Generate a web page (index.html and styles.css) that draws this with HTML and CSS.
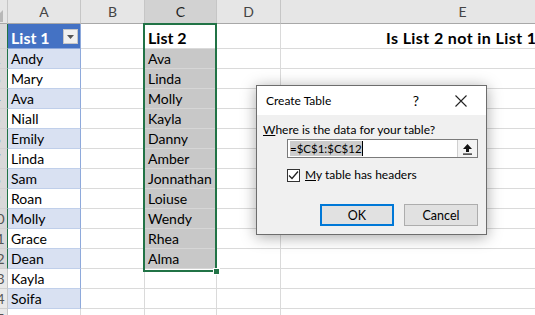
FILE: index.html
```html
<!DOCTYPE html>
<html lang="en">
<head>
    <meta charset="UTF-8">
    <title>Create Table</title>
    <link rel="stylesheet" href="styles.css">
</head>
<body>
    <div class="sheet">
        <div class="row head">
            <div class="rh corner">
                <svg width="26" height="24" viewBox="0 0 26 24"><polygon points="9,22 21,22 21,10" fill="#b8b8b8"/></svg>
            </div>
            <div class="ch">A</div>
            <div class="ch">B</div>
            <div class="ch ch-sel">C</div>
            <div class="ch">D</div>
            <div class="ch">E</div>
        </div>
        <div class="row r1">
            <div class="rh rh-sel">1</div>
            <div class="c th">List 1
                <span class="filter">
                    <svg width="7" height="4" viewBox="0 0 7 4"><polygon points="0,0 7,0 3.5,4" fill="#555"/></svg>
                </span>
            </div>
            <div class="c"></div>
            <div class="c act">List 2</div>
            <div class="c"></div>
            <div class="c title">Is List 2 not in List 1</div>
        </div>
        <div class="row"><div class="rh rh-sel">2</div><div class="c tb">Andy</div><div class="c"></div><div class="c sl">Ava</div><div class="c"></div><div class="c"></div></div>
        <div class="row"><div class="rh rh-sel">3</div><div class="c tw">Mary</div><div class="c"></div><div class="c sl">Linda</div><div class="c"></div><div class="c"></div></div>
        <div class="row"><div class="rh rh-sel">4</div><div class="c tb">Ava</div><div class="c"></div><div class="c sl">Molly</div><div class="c"></div><div class="c"></div></div>
        <div class="row"><div class="rh rh-sel">5</div><div class="c tw">Niall</div><div class="c"></div><div class="c sl">Kayla</div><div class="c"></div><div class="c"></div></div>
        <div class="row"><div class="rh rh-sel">6</div><div class="c tb">Emily</div><div class="c"></div><div class="c sl">Danny</div><div class="c"></div><div class="c"></div></div>
        <div class="row"><div class="rh rh-sel">7</div><div class="c tw">Linda</div><div class="c"></div><div class="c sl">Amber</div><div class="c"></div><div class="c"></div></div>
        <div class="row"><div class="rh rh-sel">8</div><div class="c tb">Sam</div><div class="c"></div><div class="c sl">Jonnathan</div><div class="c"></div><div class="c"></div></div>
        <div class="row"><div class="rh rh-sel">9</div><div class="c tw">Roan</div><div class="c"></div><div class="c sl">Loiuse</div><div class="c"></div><div class="c"></div></div>
        <div class="row"><div class="rh rh-sel">10</div><div class="c tb">Molly</div><div class="c"></div><div class="c sl">Wendy</div><div class="c"></div><div class="c"></div></div>
        <div class="row"><div class="rh rh-sel">11</div><div class="c tw">Grace</div><div class="c"></div><div class="c sl">Rhea</div><div class="c"></div><div class="c"></div></div>
        <div class="row"><div class="rh rh-sel">12</div><div class="c tb">Dean</div><div class="c"></div><div class="c sl">Alma</div><div class="c"></div><div class="c"></div></div>
        <div class="row"><div class="rh">13</div><div class="c tw">Kayla</div><div class="c"></div><div class="c"></div><div class="c"></div><div class="c"></div></div>
        <div class="row"><div class="rh">14</div><div class="c tb">Soifa</div><div class="c"></div><div class="c"></div><div class="c"></div><div class="c"></div></div>
        <div class="row"><div class="rh">15</div><div class="c"></div><div class="c"></div><div class="c"></div><div class="c"></div><div class="c"></div></div>
    </div>

    <div class="selection"><span class="handle"></span></div>

    <div class="dialog">
        <div class="dlg-title">
            <span class="dlg-name">Create Table</span>
            <span class="dlg-help">?</span>
            <svg class="dlg-close" width="12" height="12" viewBox="0 0 12 12"><path d="M0.5 0.5 L11.5 11.5 M11.5 0.5 L0.5 11.5" stroke="#222" stroke-width="1.1"/></svg>
        </div>
        <div class="dlg-body">
            <div class="dlg-label"><u>W</u>here is the data for your table?</div>
            <div class="ref-box">
                <span class="ref-text"><span class="ref-hl">=$C$1:$C$12</span><span class="caret"></span></span>
                <span class="ref-btn">
                    <svg width="11" height="12" viewBox="0 0 11 12"><path d="M5.5 1 L10 6 L7 6 L7 9 L4 9 L4 6 L1 6 Z" fill="#111"/><rect x="1" y="10.5" width="9" height="1.2" fill="#111"/></svg>
                </span>
            </div>
            <label class="check-row">
                <span class="check">
                    <svg width="11" height="11" viewBox="0 0 11 11"><path d="M1 5.5 L4 8.5 L10 1.5" fill="none" stroke="#222" stroke-width="1.3"/></svg>
                </span>
                <span><u>M</u>y table has headers</span>
            </label>
            <div class="dlg-buttons">
                <button class="btn btn-ok">OK</button>
                <button class="btn">Cancel</button>
            </div>
        </div>
    </div>
</body>
</html>
```

FILE: styles.css
```css
body {
    margin: 0;
    background: #fff;
    overflow: hidden;
    width: 535px;
    height: 315px;
    position: relative;
    font-family: Lato, "Liberation Sans", sans-serif;
}
.sheet {
    margin-left: -18px;
    width: 700px;
}
.row {
    display: grid;
    grid-template-columns: 26px 73px 64px 72px 64px 364px;
    height: 20px;
}
.row.head {
    height: 24px;
}
.row.r1 {
    height: 25px;
}
.c {
    box-sizing: border-box;
    border-right: 1px solid #dadada;
    border-bottom: 1px solid #dadada;
    font-size: 14px;
    line-height: 18px;
    padding-left: 3px;
    display: flex;
    align-items: flex-end;
    white-space: nowrap;
    overflow: hidden;
    color: #000;
}
.ch {
    box-sizing: border-box;
    background: #e6e6e6;
    border-right: 1px solid #c6c6c6;
    border-bottom: 1px solid #a8a8a8;
    font-size: 14px;
    color: #444;
    text-align: center;
    line-height: 23px;
}
.ch-sel {
    background: #d2d2d2;
    color: #222;
}
.rh {
    box-sizing: border-box;
    background: #e9e9e9;
    border-right: 1px solid #c6c6c6;
    border-bottom: 1px solid #d0d0d0;
    font-size: 14px;
    color: #555;
    text-align: center;
    padding-left: 4px;
    line-height: 19px;
    overflow: hidden;
}
.rh-sel {
    background: #d9d9d9;
    border-right: 1px solid #217346;
}
.rh.corner {
    background: #e6e6e6;
    border-right: 1px solid #c6c6c6;
    border-bottom: 1px solid #a8a8a8;
    padding: 0;
}
.corner svg {
    display: block;
}
.th {
    background: #4472c4;
    color: #fff;
    font-weight: bold;
    font-size: 16px;
    line-height: 20px;
    border-right: 1px solid #8ea9db;
    border-bottom: 1px solid #8ea9db;
    position: relative;
}
.filter {
    position: absolute;
    right: 2px;
    top: 5px;
    width: 15px;
    height: 15px;
    box-sizing: border-box;
    background: #f0f0f0;
    border: 1px solid #c6c6c6;
    display: flex;
    align-items: center;
    justify-content: center;
}
.tb {
    background: #d9e1f2;
    border-right: 1px solid #8ea9db;
    border-bottom: 1px solid #c0cfea;
}
.tw {
    background: #fff;
    border-right: 1px solid #8ea9db;
    border-bottom: 1px solid #c0cfea;
}
.act {
    font-weight: bold;
    font-size: 16px;
    line-height: 20px;
}
.sl {
    background: #c8c8c8;
    border-bottom: 1px solid #d6d6d6;
}
.title {
    font-weight: bold;
    font-size: 16px;
    line-height: 20px;
    letter-spacing: 0.4px;
    padding-left: 105px;
}
.selection {
    position: absolute;
    left: 143px;
    top: 23px;
    width: 74px;
    height: 249px;
    box-sizing: border-box;
    border: 2px solid #217346;
}
.handle {
    position: absolute;
    right: -5px;
    bottom: -5px;
    width: 5px;
    height: 5px;
    background: #217346;
    border: 1px solid #fff;
}
.dialog {
    position: absolute;
    left: 256px;
    top: 85px;
    width: 231px;
    height: 150px;
    box-sizing: border-box;
    border: 1px solid #6d6d6d;
    background: #f0f0f0;
    box-shadow: 0 2px 14px rgba(0, 0, 0, 0.35);
    font-family: Lato, "Liberation Sans", sans-serif;
    font-size: 12px;
    color: #000;
}
.dlg-title {
    background: #fff;
    height: 29px;
    display: flex;
    align-items: center;
    padding-left: 9px;
}
.dlg-name {
    flex: 1;
}
.dlg-help {
    font-size: 14px;
    margin-right: 36px;
}
.dlg-close {
    margin-right: 19px;
}
.dlg-body {
    padding: 7px 8px 0 6px;
}
.dlg-label {
    line-height: 16px;
}
.ref-box {
    margin: 1px 0 0 24px;
    height: 19px;
    box-sizing: border-box;
    background: #fff;
    border: 1px solid #7a7a7a;
    display: flex;
    align-items: center;
}
.ref-text {
    flex: 1;
    padding-left: 2px;
    display: flex;
    align-items: center;
    font-size: 11.5px;
}
.ref-hl {
    background: #cccccc;
    line-height: 15px;
}
.caret {
    width: 1px;
    height: 15px;
    background: #000;
}
.ref-btn {
    width: 20px;
    height: 17px;
    box-sizing: border-box;
    border-left: 1px solid #d0d0d0;
    background: #f3f3f3;
    display: flex;
    align-items: center;
    justify-content: center;
}
.check-row {
    margin: 9px 0 0 24px;
    display: flex;
    align-items: center;
    gap: 5px;
    line-height: 16px;
}
.check {
    width: 13px;
    height: 13px;
    box-sizing: border-box;
    border: 1px solid #333;
    background: #fff;
    display: flex;
    align-items: center;
    justify-content: center;
}
.dlg-buttons {
    display: flex;
    justify-content: flex-end;
    gap: 10px;
    margin-top: 21px;
}
.btn {
    width: 74px;
    height: 22px;
    box-sizing: border-box;
    background: #e1e1e1;
    border: 1px solid #adadad;
    font-family: Lato, "Liberation Sans", sans-serif;
    font-size: 12.5px;
    padding: 0;
    color: #000;
}
.btn-ok {
    border: 2px solid #0078d7;
}
```
